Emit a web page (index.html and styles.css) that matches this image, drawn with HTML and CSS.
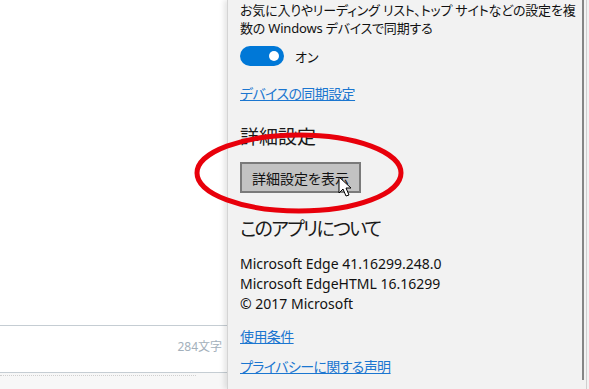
FILE: index.html
```html
<!DOCTYPE html>
<html lang="ja">

<head>
  <meta charset="UTF-8" />
  <meta name="viewport" content="width=device-width, initial-scale=1" />
  <title>設定</title>
  <link rel="stylesheet" href="styles.css">
</head>

<body>
  <div class="editor">
    <div class="editor-body"></div>
    <div class="count-bar">284文字</div>
    <div class="editor-footer">
      <div class="dots"></div>
    </div>
  </div>

  <aside class="panel">
    <div class="panel-content">
      <p class="desc">お気に入りやリーディング リスト、トップ サイトなどの設定を複数の Windows デバイスで同期する</p>

      <div class="toggle-row">
        <span class="toggle"><span class="knob"></span></span>
        <span class="toggle-label">オン</span>
      </div>

      <a class="link sync-link" href="#">デバイスの同期設定</a>

      <h2 class="heading">詳細設定</h2>
      <button class="btn">詳細設定を表示</button>

      <h2 class="heading about">このアプリについて</h2>
      <div class="info">
        <div>Microsoft Edge 41.16299.248.0</div>
        <div>Microsoft EdgeHTML 16.16299</div>
        <div>© 2017 Microsoft</div>
      </div>

      <a class="link terms" href="#">使用条件</a>
      <a class="link privacy" href="#">プライバシーに関する声明</a>
    </div>
    <div class="scroll-track"><div class="scroll-thumb"></div></div>
    <div class="edge"></div>
  </aside>

  <!-- annotation drawn over the screenshot -->
  <svg class="mark" width="589" height="389" viewBox="0 0 589 389">
    <ellipse cx="299" cy="173" rx="102" ry="38" fill="none" stroke="#e8000b" stroke-width="5" />
    <path d="M339 177 L339 193 L343 189 L346 196 L349 195 L346 188 L351 188 Z" fill="#fff" stroke="#000" stroke-width="1" stroke-linejoin="round" />
  </svg>
</body>

</html>
```

FILE: styles.css
```css
body {
  margin: 0;
  width: 589px;
  height: 389px;
  overflow: hidden;
  display: flex;
  font-family: "Noto Sans", "Noto Sans CJK JP", sans-serif;
  font-feature-settings: "palt";
  color: #111;
  background-color: #fff;
  position: relative;
}

.editor {
  width: 227px;
  display: flex;
  flex-direction: column;
  background-color: #fff;
}

.editor-body {
  flex: 1;
}

.count-bar {
  height: 48px;
  border-top: 1px solid #c5cdd3;
  border-bottom: 1px solid #c5cdd3;
  box-sizing: border-box;
  text-align: right;
  padding-right: 5px;
  line-height: 42px;
  font-size: 12px;
  color: #a3b0bb;
}

.editor-footer {
  height: 16px;
  background-color: #f7f7f7;
  padding-top: 2px;
  box-sizing: border-box;
}

.dots {
  width: 196px;
  border-top: 1px dotted #cfcfcf;
}

.panel {
  flex: 1;
  display: flex;
  background-color: #f2f2f2;
  border-left: 1px solid #d4d4d4;
  box-shadow: -3px 0 5px rgba(0, 0, 0, 0.1);
}

.panel-content {
  flex: 1;
  padding: 1px 0 0 12px;
  display: flex;
  flex-direction: column;
  align-items: flex-start;
}

.desc {
  margin: 0;
  font-size: 13px;
  letter-spacing: -0.2px;
  line-height: 18px;
  width: 340px;
}

.toggle-row {
  margin-top: 9px;
  display: flex;
  align-items: center;
  gap: 11px;
}

.toggle {
  width: 44px;
  height: 20px;
  border-radius: 10px;
  background-color: #0078d7;
  display: flex;
  align-items: center;
  justify-content: flex-end;
  padding-right: 5px;
  box-sizing: border-box;
}

.knob {
  width: 10px;
  height: 10px;
  border-radius: 50%;
  background-color: #fff;
}

.toggle-label {
  font-size: 13px;
}

.link {
  color: #1b76d0;
  font-size: 14px;
  letter-spacing: -0.6px;
  line-height: 20px;
  text-decoration: underline;
}

.sync-link {
  margin-top: 18px;
}

.heading {
  margin: 20px 0 0;
  font-size: 19px;
  font-weight: normal;
  line-height: 26px;
  color: #1a1a1a;
}

.btn {
  margin-top: 12px;
  width: 121px;
  height: 31px;
  border: 2px solid #7a7a7a;
  background-color: #c2c2c2;
  font-family: inherit;
  font-feature-settings: "palt";
  font-size: 14px;
  color: #111;
  padding: 0;
}

.heading.about {
  margin-top: 23px;
  letter-spacing: -1.8px;
}

.info {
  margin-top: 12px;
  font-size: 14px;
  line-height: 20px;
}

.terms {
  margin-top: 13px;
}

.privacy {
  margin-top: 10px;
}

.scroll-track {
  width: 4px;
  padding-left: 1px;
}

.scroll-thumb {
  width: 2px;
  height: 380px;
  background-color: #858585;
}

.edge {
  width: 2px;
  border-left: 1px solid #cfcfcf;
}

.mark {
  position: absolute;
  left: 0;
  top: 0;
  pointer-events: none;
}
```
